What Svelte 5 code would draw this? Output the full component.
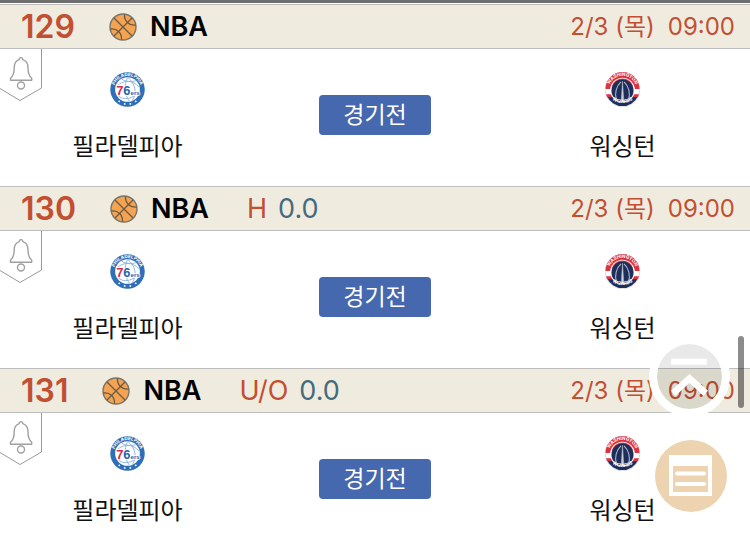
<script>
  const games = [
    { id: 129, league: 'NBA', market: '', line: '' },
    { id: 130, league: 'NBA', market: 'H', line: '0.0' },
    { id: 131, league: 'NBA', market: 'U/O', line: '0.0' }
  ].map((g) => ({ ...g, date: '2/3 (목)', time: '09:00', home: '필라델피아', away: '워싱턴', status: '경기전' }));
</script>

{#snippet basketball()}
  <svg class="ball" viewBox="0 0 28 28" aria-hidden="true">
    <circle cx="14" cy="14" r="13" fill="#f4a352" stroke="#77756a" stroke-width="1.4" />
    <g fill="none" stroke="#6b5a42" stroke-width="1.3">
      <path d="M5 5L23 23M23 5L5 23" />
      <path d="M15.5 1.2C15 7 19 12.5 26.6 12" />
      <path d="M1.4 16C8 15 13 20 12.5 26.8" />
    </g>
  </svg>
{/snippet}

{#snippet bell()}
  <svg class="ribbon" viewBox="0 0 42 52" fill="none" aria-hidden="true">
    <path d="M41.5 0V39L20 51.5L0 39.5" stroke="#999" stroke-width="1" />
    <path
      d="M10.5 31.3V29.3C13.5 26.8 14.2 24 14.2 19C14.2 14 16 11.5 19.3 10.6C19.3 8 22.7 8 22.7 10.6C26 11.5 28 14 28 19C28 24 28.7 26.8 31.7 29.3V31.3Z"
      stroke="#a0a0a0" stroke-width="1.4" stroke-linejoin="round" />
    <circle cx="21" cy="36.5" r="3.5" stroke="#a0a0a0" stroke-width="1.4" />
  </svg>
{/snippet}

{#snippet sixers(id)}
  <svg class="logo" viewBox="0 0 68 68" aria-hidden="true">
    <circle cx="34" cy="34" r="33.5" fill="#2f6fb7" />
    <circle cx="34" cy="34" r="24" fill="#fff" />
    <g fill="none" stroke="#8db3d9" stroke-width="1.8">
      <path d="M14 27C24 16 44 14 56 29M23 14C33 21 48 18 50 17M35 11C50 23 53 43 43 56M15 45C25 57 46 52 56 38M34 11C27 26 28 45 38 57" />
    </g>
    <path id="phi-{id}" d="M12 49A26.5 26.5 0 1 1 56 49" fill="none" />
    <text class="ring-text"><textPath href="#phi-{id}" startOffset="50%">PHILADELPHIA</textPath></text>
    <g fill="#fff">
      <circle cx="18" cy="57" r="1.8" /><circle cx="28.5" cy="62" r="1.8" />
      <circle cx="39.5" cy="62" r="1.8" /><circle cx="50" cy="57" r="1.8" />
    </g>
    <text class="sixers" x="12" y="44"><tspan class="seven">7</tspan>6<tspan class="ers">ers</tspan></text>
  </svg>
{/snippet}

{#snippet wizards(id)}
  <svg class="logo" viewBox="0 0 68 68" aria-hidden="true">
    <circle cx="34" cy="34" r="33.5" fill="#fff" stroke="#b9bdc6" stroke-width="1" />
    <path d="M1 33A33 33 0 0 1 67 33Z" fill="#dc3341" />
    <path d="M4 47H64A33 33 0 0 1 4 47Z" fill="#1d2e5a" />
    <path d="M2 43H66L64 49H4Z" fill="#dc3341" />
    <circle cx="34" cy="35" r="24" fill="#fff" />
    <path d="M13 28A22 22 0 0 1 55 28L46 22A18 18 0 0 0 22 22Z" fill="#dc3341" />
    <circle cx="34" cy="36" r="21.5" fill="#1d2e5a" />
    <g fill="none" stroke="#b9c0cd" stroke-width="2">
      <path d="M31 19C21 28 19 42 22 53M37 19C47 28 49 42 46 53" />
      <path d="M34 18L31.5 57H36.5Z" fill="#c8cdd6" stroke-width="1" />
    </g>
    <path id="was-{id}" d="M7.5 34A26.5 26.5 0 0 1 60.5 34" fill="none" />
    <path id="wiz-{id}" d="M5 42A32 32 0 0 0 63 42" fill="none" />
    <text class="ring-text"><textPath href="#was-{id}" startOffset="50%">WASHINGTON</textPath></text>
    <text class="ring-text"><textPath href="#wiz-{id}" startOffset="50%">WIZARDS</textPath></text>
  </svg>
{/snippet}

<main>
  {#each games as game (game.id)}
    <article>
      <header>
        <span class="number">{game.id}</span>
        {@render basketball()}
        <span class="league">{game.league}</span>
        {#if game.market}
          <span class="market">{game.market}</span>
          <span class="line">{game.line}</span>
        {/if}
        <span class="date">{game.date}</span>
        <time>{game.time}</time>
      </header>
      <div class="match">
        <button class="alarm" aria-label="알림">{@render bell()}</button>
        <div class="team">
          {@render sixers(game.id)}
          <span>{game.home}</span>
        </div>
        <button class="status">{game.status}</button>
        <div class="team">
          {@render wizards(game.id)}
          <span>{game.away}</span>
        </div>
      </div>
    </article>
  {/each}
</main>

<div class="thumb"></div>
<nav>
  <button class="top" aria-label="맨 위로">
    <svg viewBox="0 0 64 64" fill="none" stroke="#fff" aria-hidden="true">
      <path d="M14 17.5H49" stroke-width="6" />
      <path d="M16 48.5L32 34L48 48.5" stroke-width="6.5" />
    </svg>
  </button>
  <button class="list" aria-label="목록">
    <svg viewBox="0 0 72 72" fill="none" aria-hidden="true">
      <path d="M14 15H57V56H14Z" fill="#fff" />
      <path d="M18 26H53V52H18Z" fill="#eed3b1" />
      <path d="M22 33.5H49M22 44H49" stroke="#fff" stroke-width="4" stroke-linecap="round" />
    </svg>
  </button>
</nav>

<style>
  :global(html) {
    scrollbar-width: none;
  }
  :global(body) {
    background: #fff;
  }
  main {
    height: 100vh;
    box-sizing: border-box;
    overflow-y: auto;
    scrollbar-width: none;
    border-top: 3px solid #6e6e6e;
    padding-top: 1px;
    font-family: Inter, 'Noto Sans CJK KR', sans-serif;
    color: #111;
  }
  button {
    border: 0;
    padding: 0;
    background: none;
    font: inherit;
    cursor: pointer;
  }
  svg {
    display: block;
  }
  header {
    display: flex;
    align-items: center;
    height: 45px;
    box-sizing: border-box;
    padding: 0 15px 0 21px;
    background: #efecdf;
    border-top: 1px solid #bdbdbd;
    border-bottom: 1px solid #bdbdbd;
    font-size: 24px;
    line-height: 32px;
    color: #c34f32;
    white-space: nowrap;
  }
  .number {
    font-size: 32px;
    font-weight: 600;
  }
  .ball {
    width: 28px;
    height: 28px;
    margin: 0 13px 0 34px;
  }
  .league {
    font-size: 27px;
    font-weight: 600;
    color: #000;
  }
  .market {
    font-size: 27px;
    margin-left: 38px;
  }
  .line {
    font-size: 27px;
    margin-left: 11px;
    color: #456a7d;
  }
  .date {
    margin-left: auto;
  }
  time {
    margin-left: 13px;
  }
  .match {
    position: relative;
    display: grid;
    grid-template-columns: 34fr 32fr 34fr;
    height: 137px;
  }
  .alarm {
    position: absolute;
    top: 0;
    left: 0;
  }
  .ribbon {
    width: 42px;
    height: 52px;
  }
  .team {
    display: flex;
    flex-direction: column;
    align-items: center;
    gap: 22px;
    padding-top: 23px;
    font-size: 24px;
    line-height: 36px;
  }
  .logo {
    width: 35px;
    height: 35px;
  }
  .ring-text {
    font-size: 9px;
    font-weight: 700;
    fill: #fff;
    text-anchor: middle;
  }
  .sixers {
    font-family: 'Liberation Sans', sans-serif;
    font-size: 25px;
    font-weight: 700;
    fill: #2365ac;
    stroke: #fff;
    stroke-width: 3px;
    paint-order: stroke;
  }
  .seven {
    fill: #dc2847;
  }
  .ers {
    font-size: 12px;
  }
  .status {
    justify-self: center;
    width: 112px;
    height: 40px;
    margin-top: 46px;
    border-radius: 4px;
    background: #4668ae;
    color: #fff;
    font-size: 23px;
    line-height: 40px;
  }
  .thumb {
    position: fixed;
    top: 336px;
    right: 6px;
    width: 6px;
    height: 72px;
    border-radius: 3px;
    background: rgba(0, 0, 0, 0.45);
  }
  nav {
    position: fixed;
    right: 20px;
    bottom: 29px;
    display: flex;
    flex-direction: column;
    align-items: center;
    gap: 23px;
  }
  .top {
    box-sizing: border-box;
    width: 81px;
    height: 81px;
    border: 8px solid #fff;
    border-radius: 50%;
    background: rgba(0, 0, 0, 0.085);
    background-clip: padding-box;
  }
  .list {
    width: 72px;
    height: 72px;
    margin-left: 2px;
    border-radius: 50%;
    background: #eed3b1;
  }
</style>
